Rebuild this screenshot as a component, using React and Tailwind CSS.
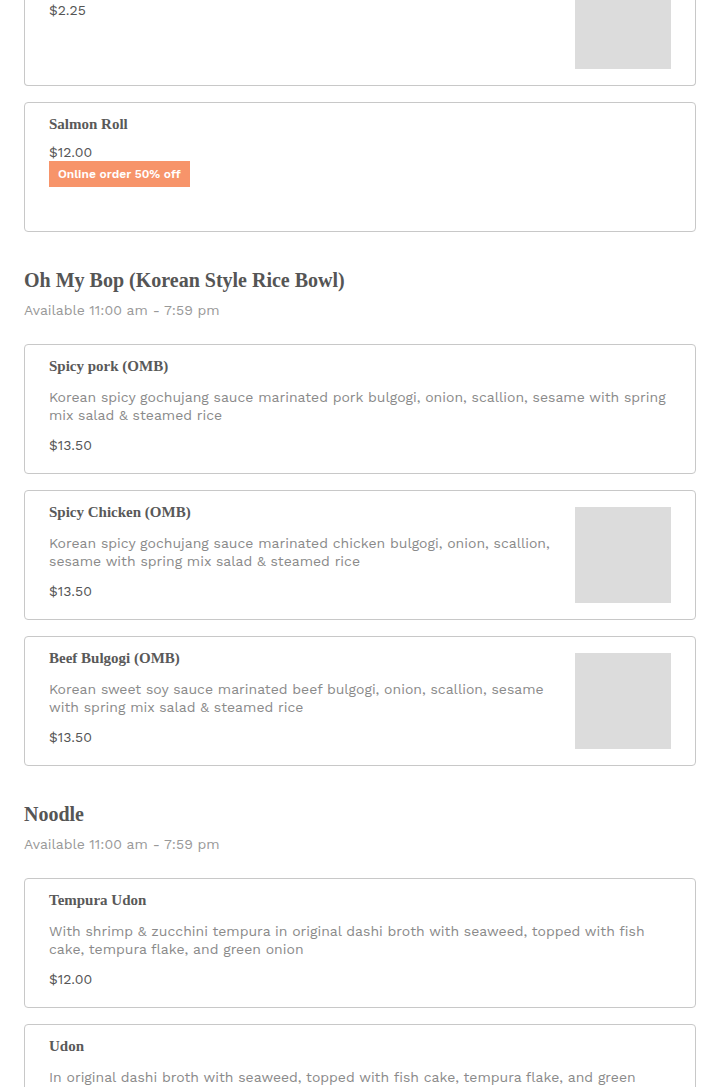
import React from 'react';

const sections = [
  {
    id: 'omb',
    title: 'Oh My Bop (Korean Style Rice Bowl)',
    hours: 'Available 11:00 am - 7:59 pm',
    items: [
      {
        id: 3,
        name: 'Spicy pork (OMB)',
        desc: 'Korean spicy gochujang sauce marinated pork bulgogi, onion, scallion, sesame with spring mix salad & steamed rice',
        price: '$13.50',
      },
      {
        id: 4,
        name: 'Spicy Chicken (OMB)',
        desc: 'Korean spicy gochujang sauce marinated chicken bulgogi, onion, scallion, sesame with spring mix salad & steamed rice',
        price: '$13.50',
        image: true,
      },
      {
        id: 5,
        name: 'Beef Bulgogi (OMB)',
        desc: 'Korean sweet soy sauce marinated beef bulgogi, onion, scallion, sesame with spring mix salad & steamed rice',
        price: '$13.50',
        image: true,
      },
    ],
  },
  {
    id: 'noodle',
    title: 'Noodle',
    hours: 'Available 11:00 am - 7:59 pm',
    items: [
      {
        id: 6,
        name: 'Tempura Udon',
        desc: 'With shrimp & zucchini tempura in original dashi broth with seaweed, topped with fish cake, tempura flake, and green onion',
        price: '$12.00',
      },
      {
        id: 7,
        name: 'Udon',
        desc: 'In original dashi broth with seaweed, topped with fish cake, tempura flake, and green onion',
        price: '$10.00',
      },
    ],
  },
];

const serif = "font-['Liberation_Serif',serif]";

const MenuCard = ({ item }) => (
  <div className="flex min-h-[130px] gap-5 rounded border border-[#c8c8c8] bg-white px-6 pt-[11px] pb-4">
    <div className="flex-1">
      <h3 className={`${serif} text-[15px] font-bold leading-[20px] text-[#595959]`}>{item.name}</h3>
      {item.desc && (
        <p className="mt-[12px] text-[14px] leading-[18px] text-[#8a8a8a]">{item.desc}</p>
      )}
      <p className={`${item.desc ? 'mt-[12px]' : 'mt-[9px]'} text-[14px] leading-[18px] text-[#555]`}>{item.price}</p>
      {item.badge && (
        <span className="inline-block bg-[#f7946a] px-[9px] text-[12px] font-semibold leading-[26px] text-white">
          {item.badge}
        </span>
      )}
    </div>
    {item.image && <div className="mt-[5px] h-24 w-24 shrink-0 bg-[#dcdcdc]" />}
  </div>
);

const App = () => {
  return (
    <div className="min-h-screen overflow-hidden bg-white px-6 font-['Work_Sans','Open_Sans',sans-serif]">
      {/* tail of the previous section, scrolled partly out of view */}
      <div className="flex flex-col gap-4 pb-[34px]">
        <div className="flex h-[86px] gap-5 rounded-b border border-t-0 border-[#c8c8c8] bg-white px-6">
          <div className="flex-1">
            <p className="mt-px text-[14px] leading-[18px] text-[#555]">$2.25</p>
          </div>
          <div className="h-[69px] w-24 shrink-0 bg-[#dcdcdc]" />
        </div>
        <MenuCard item={{ name: 'Salmon Roll', price: '$12.00', badge: 'Online order 50% off' }} />
      </div>

      {sections.map((section) => (
        <div key={section.id} className="pb-[34px]">
          <div className="mb-[25px]">
            <h2 className={`${serif} text-[20px] font-bold leading-[28px] text-[#555]`}>{section.title}</h2>
            <p className="mt-[7px] text-[14px] leading-[18px] text-[#999]">{section.hours}</p>
          </div>
          <div className="flex flex-col gap-4">
            {section.items.map((item) => (
              <MenuCard key={item.id} item={item} />
            ))}
          </div>
        </div>
      ))}
    </div>
  );
};

export default App;
